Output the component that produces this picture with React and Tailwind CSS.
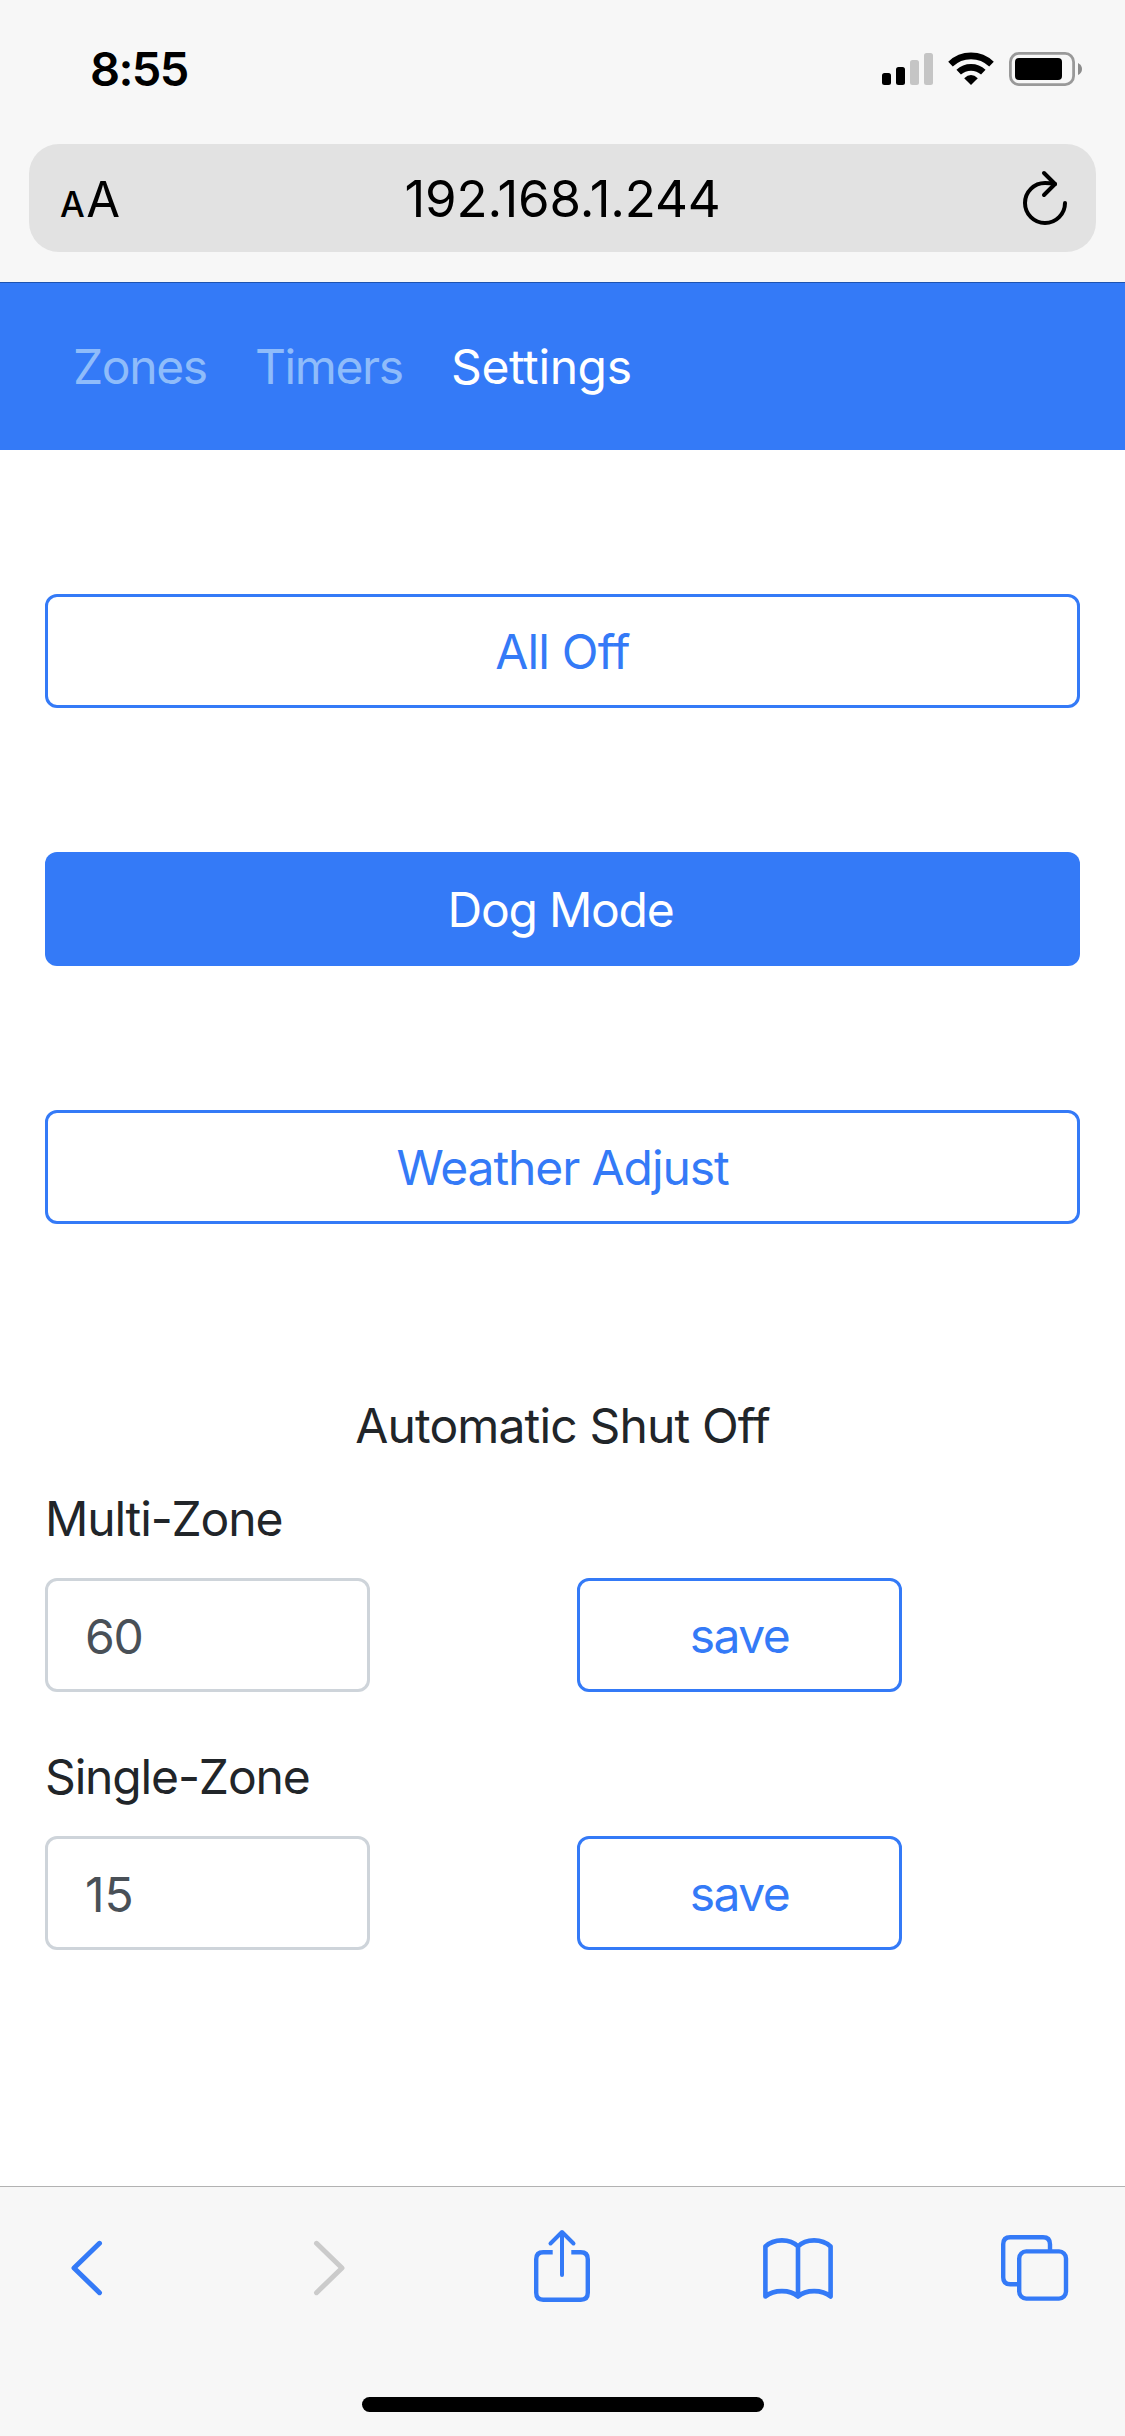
function StatusBar() {
  return (
    <div className="flex h-36 items-start justify-between pt-[41px] pr-[43px] pl-[90px]">
      <span className="text-[47px] leading-[56px] font-semibold tracking-[-1.6px] text-black">8:55</span>
      <svg className="mt-[11px] h-[34px] w-[200px]" viewBox="882 52 200 34">
        <rect x="882" y="73" width="9" height="12" rx="2.5" />
        <rect x="896" y="67" width="9" height="18" rx="2.5" />
        <rect x="910" y="60" width="9" height="25" rx="2.5" fill="#c5c5c5" />
        <rect x="924" y="53" width="9" height="32" rx="2.5" fill="#c5c5c5" />
        <g fill="none" stroke="#000" strokeWidth="6.6">
          <path d="M950.5 64.2A29.5 29.5 0 0 1 991.5 64.2" />
          <path d="M958.7 72.2A18 18 0 0 1 983.3 72.2" />
        </g>
        <path d="M971 85L964.2 78.2Q971 71.8 977.8 78.2Z" />
        <rect x="1010.4" y="53.4" width="63.2" height="31.2" rx="8.5" fill="none" stroke="#999" strokeWidth="2.8" />
        <rect x="1015" y="58" width="47" height="22" rx="4" />
        <path d="M1078 63Q1082 65 1082 69T1078 75Z" fill="#8c8c8c" />
      </svg>
    </div>
  );
}

function AddressBar() {
  return (
    <div className="mx-[29px] grid h-[108px] grid-cols-3 items-center rounded-[30px] bg-[#e2e2e2] pr-[27px] pl-[31px] text-black">
      <div className="flex items-baseline gap-[3px] pt-[7px]">
        <span className="text-[35px] leading-[56px] font-medium tracking-[-1.5px]">A</span>
        <span className="text-[49px] leading-[56px] tracking-[-1px]">A</span>
      </div>
      <span className="mr-1 justify-self-center pt-0.5 text-[51px] leading-[60px] tracking-[-0.2px] whitespace-nowrap">
        192.168.1.244
      </span>
      <svg
        className="mt-0.5 h-[58px] w-[48px] justify-self-end"
        viewBox="1021 170 48 58"
        fill="none"
        stroke="#000"
        strokeWidth="4"
        strokeLinecap="round"
        strokeLinejoin="round"
      >
        <path d="M1065 203A20 20 0 1 1 1045 183Q1050 183 1055 184" />
        <path d="M1044 173L1055 184L1044 195" />
      </svg>
    </div>
  );
}

function Navbar() {
  return (
    <nav className="flex h-[168px] border-t border-[#1d53b0] bg-[#347af7] pt-[48px] pl-[73px] text-[48px] leading-[72px]">
      <span className="w-[182px] tracking-[-1.4px] text-[#8fbcfa]">Zones</span>
      <span className="w-[196px] tracking-[-1.4px] text-[#8fbcfa]">Timers</span>
      <span className="tracking-[-0.4px] text-white">Settings</span>
    </nav>
  );
}

function Field({ label, value, valueClass }) {
  return (
    <div>
      <label className="block leading-[72px] tracking-[-1.15px]">{label}</label>
      <div className="mt-[23px] flex">
        <input
          className={`h-[114px] w-[325px] rounded-xl border-3 border-[#ced4da] bg-white pt-0.5 pl-[37px] text-[#495057] ${valueClass}`}
          defaultValue={value}
        />
        <button className="ml-[207px] h-[114px] w-[325px] rounded-xl border-3 border-[#347af7] pt-0.5 tracking-[-1.5px] text-[#347af7]">
          save
        </button>
      </div>
    </div>
  );
}

function Toolbar() {
  return (
    <footer className="flex h-[250px] flex-col border-t border-[#b2b2b2] bg-[#f7f7f7]">
      <div className="flex h-[162px] items-center pl-[68px] text-[#347af7]">
        <svg className="h-[80px] w-[37px]" viewBox="68 2228 37 80" fill="none" stroke="currentColor" strokeWidth="5" strokeLinecap="round" strokeLinejoin="round">
          <path d="M99.5 2243.3L74 2268L99.5 2292.7" />
        </svg>
        <svg className="ml-[206px] h-[80px] w-[37px]" viewBox="311 2228 37 80" fill="none" stroke="#cbcbcb" strokeWidth="5" strokeLinecap="round" strokeLinejoin="round">
          <path d="M316.5 2243.3L342 2268L316.5 2292.7" />
        </svg>
        <svg className="ml-[184px] h-[80px] w-[60px]" viewBox="532 2228 60 80" fill="none" stroke="currentColor" strokeWidth="4.4" strokeLinejoin="round">
          <path d="M552.7 2252.3H543.2Q536.2 2252.3 536.2 2259.3V2292.7Q536.2 2299.7 543.2 2299.7H580.8Q587.8 2299.7 587.8 2292.7V2259.3Q587.8 2252.3 580.8 2252.3H571.3" />
          <path strokeLinecap="round" strokeWidth="4" d="M562 2275V2232.5M550.5 2243.5L562 2232L573.5 2243.5" />
        </svg>
        <svg className="ml-[169px] h-[80px] w-[74px]" viewBox="761 2228 74 80" fill="none" stroke="currentColor" strokeWidth="4.6" strokeLinecap="round" strokeLinejoin="round">
          <path d="M798 2246.5C790 2238.3 774 2238.3 765.4 2246.5V2296.5C774 2289.3 790 2289.3 798 2296.5C806 2289.3 822 2289.3 830.6 2296.5V2246.5C822 2238.3 806 2238.3 798 2246.5V2296.5" />
        </svg>
        <svg className="ml-[163px] h-[80px] w-[72px]" viewBox="998 2228 72 80" fill="none" stroke="currentColor" strokeWidth="4.4">
          <rect x="1019.2" y="2251.4" width="46.8" height="47.2" rx="7" />
          <path d="M1017.5 2284.3H1010.2Q1003.2 2284.3 1003.2 2277.3V2244.2Q1003.2 2237.2 1010.2 2237.2H1043Q1050 2237.2 1050 2244.2V2250" />
        </svg>
      </div>
      <div className="mx-auto mt-12 h-[15px] w-[402px] rounded-full bg-black" />
    </footer>
  );
}

export default function App() {
  return (
    <div className="flex h-[2436px] w-[1125px] flex-col overflow-hidden bg-white font-['Inter',sans-serif] text-[#212529]">
      <header className="h-[282px] bg-[#f7f7f7]">
        <StatusBar />
        <AddressBar />
      </header>
      <Navbar />
      <main className="flex flex-1 flex-col px-[45px] pt-36 text-[48px] leading-[72px]">
        <div className="flex flex-col gap-36">
          <button className="h-[114px] rounded-xl border-3 border-[#347af7] pt-0.5 tracking-[-0.8px] text-[#347af7]">
            All Off
          </button>
          <button className="h-[114px] rounded-xl bg-[#347af7] pt-0.5 pr-1 tracking-[-1.25px] text-white">Dog Mode</button>
          <button className="h-[114px] rounded-xl border-3 border-[#347af7] pt-0.5 tracking-[-1.1px] text-[#347af7]">
            Weather Adjust
          </button>
        </div>
        <h2 className="mt-[166px] text-center tracking-[-0.85px]">Automatic Shut Off</h2>
        <div className="mt-[21px] flex flex-col gap-[49px]">
          <Field label="Multi-Zone" value="60" valueClass="tracking-[-1.2px]" />
          <Field label="Single-Zone" value="15" valueClass="tracking-[0px]" />
        </div>
      </main>
      <Toolbar />
    </div>
  );
}
